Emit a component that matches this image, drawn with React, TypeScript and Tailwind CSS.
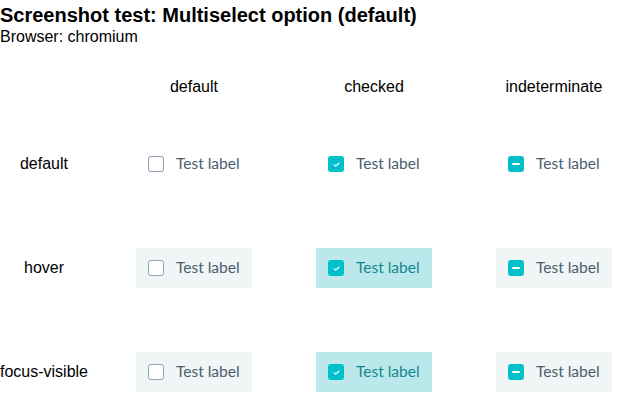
import React from "react";

type State = "default" | "checked" | "indeterminate";
type Row = "default" | "hover" | "focus-visible";

function Box({ state }: { state: State }) {
  if (state === "default") {
    return <span className="block w-4 h-4 shrink-0 rounded-[3px] border border-[#8ea3b5] bg-white box-border" />;
  }
  return (
    <span className="flex w-4 h-4 shrink-0 rounded-[3px] bg-[#00c0cb] items-center justify-center">
      {state === "checked" ? (
        <svg width="7" height="5" viewBox="0 0 7 5" fill="none">
          <path d="M1 2.7 L2.7 4.2 L6 1" stroke="white" strokeWidth="1.1" strokeLinecap="round" strokeLinejoin="round" />
        </svg>
      ) : (
        <span className="block w-2 h-[2px] bg-white rounded-[1px]" />
      )}
    </span>
  );
}

function Option({ state, row }: { state: State; row: Row }) {
  const active = row !== "default";
  let bg = "bg-transparent";
  let text = "text-[#4b5d6e]";
  if (active) {
    if (state === "checked") {
      bg = "bg-[#bbe9eb]";
      text = "text-[#14878f]";
    } else {
      bg = "bg-[#f0f5f6]";
    }
  }
  return (
    <div className={`flex items-center gap-3 px-3 h-10 w-[116px] ${bg}`}>
      <Box state={state} />
      <span className={`text-[15.5px] leading-none whitespace-nowrap ${text}`} style={{ fontFamily: "Lato, sans-serif" }}>
        Test label
      </span>
    </div>
  );
}

export default function App() {
  const states: State[] = ["default", "checked", "indeterminate"];
  const rows: Row[] = ["default", "hover", "focus-visible"];
  return (
    <div className="bg-white w-[629px] h-[408px] text-black" style={{ fontFamily: '"Liberation Sans", Arial, sans-serif' }}>
      <h1 className="text-[20px] font-bold leading-[26px] pt-[2px]">Screenshot test: Multiselect option (default)</h1>
      <div className="text-[16px] leading-[18px]">Browser: chromium</div>
      <div className="grid grid-cols-[88px_16px_180px_180px_180px] mt-[31px]">
        <div className="h-[20px]" />
        <div />
        {states.map((s) => (
          <div key={s} className="text-center text-[16px] leading-[20px]">{s}</div>
        ))}
        {rows.map((r) => (
          <React.Fragment key={r}>
            <div className="h-[104px] flex items-center justify-center text-[16px] whitespace-nowrap pt-[30px]">{r}</div>
            <div />
            {states.map((s) => (
              <div key={s} className="h-[104px] flex items-center justify-center pt-[30px]">
                <Option state={s} row={r} />
              </div>
            ))}
          </React.Fragment>
        ))}
      </div>
    </div>
  );
}
